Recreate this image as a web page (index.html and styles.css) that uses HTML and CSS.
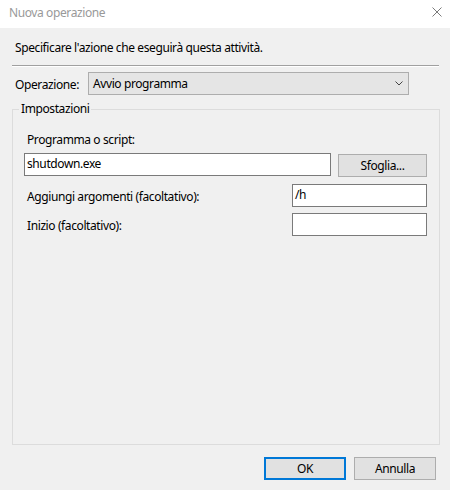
FILE: index.html
```html
<!DOCTYPE html>
<html lang="it">
<head>
<meta charset="utf-8">
<title>Nuova operazione</title>
<link rel="stylesheet" href="styles.css">
</head>
<body>
<div class="window">
  <div class="titlebar">
    <span class="title">Nuova operazione</span>
    <svg class="close" width="10" height="10" viewBox="0 0 10 10"><path d="M0.5 0.5 L9.5 9.5 M9.5 0.5 L0.5 9.5" stroke="#7a7a7a" stroke-width="1" fill="none"/></svg>
  </div>
  <div class="body">
    <p class="intro">Specificare l'azione che eseguirà questa attività.</p>
    <div class="separator"></div>
    <div class="op-row">
      <span class="op-label">Operazione:</span>
      <div class="combo">
        <span>Avvio programma</span>
        <svg class="chevron" width="8" height="5" viewBox="0 0 8 5"><path d="M0.5 0.5 L4 4 L7.5 0.5" stroke="#444" stroke-width="1" fill="none"/></svg>
      </div>
    </div>
    <fieldset class="group">
      <legend>Impostazioni</legend>
      <div class="field-label">Programma o script:</div>
      <div class="prog-row">
        <div class="input wide">shutdown.exe</div>
        <div class="button browse">Sfoglia...</div>
      </div>
      <div class="arg-row">
        <span class="arg-label">Aggiungi argomenti (facoltativo):</span>
        <div class="input small">/h</div>
      </div>
      <div class="arg-row">
        <span class="arg-label">Inizio (facoltativo):</span>
        <div class="input small"></div>
      </div>
    </fieldset>
    <div class="footer">
      <div class="button ok">OK</div>
      <div class="button">Annulla</div>
    </div>
  </div>
</div>
</body>
</html>
```

FILE: styles.css
```css
html, body {
  margin: 0;
  padding: 0;
}
body {
  width: 450px;
  height: 490px;
  background: #f0f0f0;
  font-family: "Noto Sans", "Open Sans", sans-serif;
  font-size: 12px;
  letter-spacing: -0.4px;
  color: #000;
  overflow: hidden;
}
.titlebar {
  height: 28px;
  background: #fff;
  display: flex;
  align-items: center;
  justify-content: space-between;
  padding: 0 8px 0 9px;
  box-sizing: border-box;
}
.title {
  color: #999;
  line-height: 16px;
  margin-top: -2px;
}
.close {
  display: block;
  margin-top: -4px;
}
.body {
  padding: 0 10px 0 12px;
}
.intro {
  margin: 12px 0 0 3px;
  line-height: 16px;
}
.separator {
  margin-top: 9px;
  height: 0;
  border-top: 1px solid #a0a0a0;
  border-bottom: 1px solid #fff;
  margin-right: 1px;
}
.op-row {
  margin-top: 5px;
  display: flex;
  align-items: center;
}
.op-label {
  margin-left: 3px;
  width: 73px;
  line-height: 16px;
  padding-top: 2px;
}
.combo {
  width: 321px;
  height: 23px;
  box-sizing: border-box;
  border: 1px solid #adadad;
  background: #e5e5e5;
  display: flex;
  align-items: center;
  justify-content: space-between;
  padding: 0 5px 0 4px;
}
.chevron {
  display: block;
}
.group {
  margin: 6px 0 0 0;
  padding: 15px 12px 0 11px;
  border: 1px solid #dcdcdc;
  height: 344px;
  box-sizing: border-box;
  min-width: 0;
}
.group legend {
  padding: 0 2px;
  margin-left: -5px;
  line-height: 16px;
}
.field-label {
  margin-left: 3px;
  line-height: 16px;
}
.prog-row {
  margin-top: 5px;
  display: flex;
  align-items: flex-start;
  gap: 7px;
}
.input {
  height: 23px;
  box-sizing: border-box;
  border: 1px solid #7a7a7a;
  background: #fff;
  padding: 0 2px;
  line-height: 20px;
}
.wide {
  width: 307px;
}
.small {
  width: 135px;
}
.button {
  width: 82px;
  height: 23px;
  box-sizing: border-box;
  border: 1px solid #adadad;
  background: #e1e1e1;
  display: flex;
  align-items: center;
  justify-content: center;
  line-height: 16px;
}
.browse {
  width: 89px;
  margin-top: 1px;
}
.arg-row {
  display: flex;
  align-items: center;
  justify-content: space-between;
  margin-top: 7px;
}
.arg-row + .arg-row {
  margin-top: 6px;
}
.arg-label {
  margin-left: 3px;
  line-height: 16px;
  padding-top: 3px;
}
.footer {
  display: flex;
  justify-content: flex-end;
  gap: 8px;
  margin-top: 12px;
  margin-right: 4px;
}
.ok {
  border: 2px solid #0078d7;
}
```
